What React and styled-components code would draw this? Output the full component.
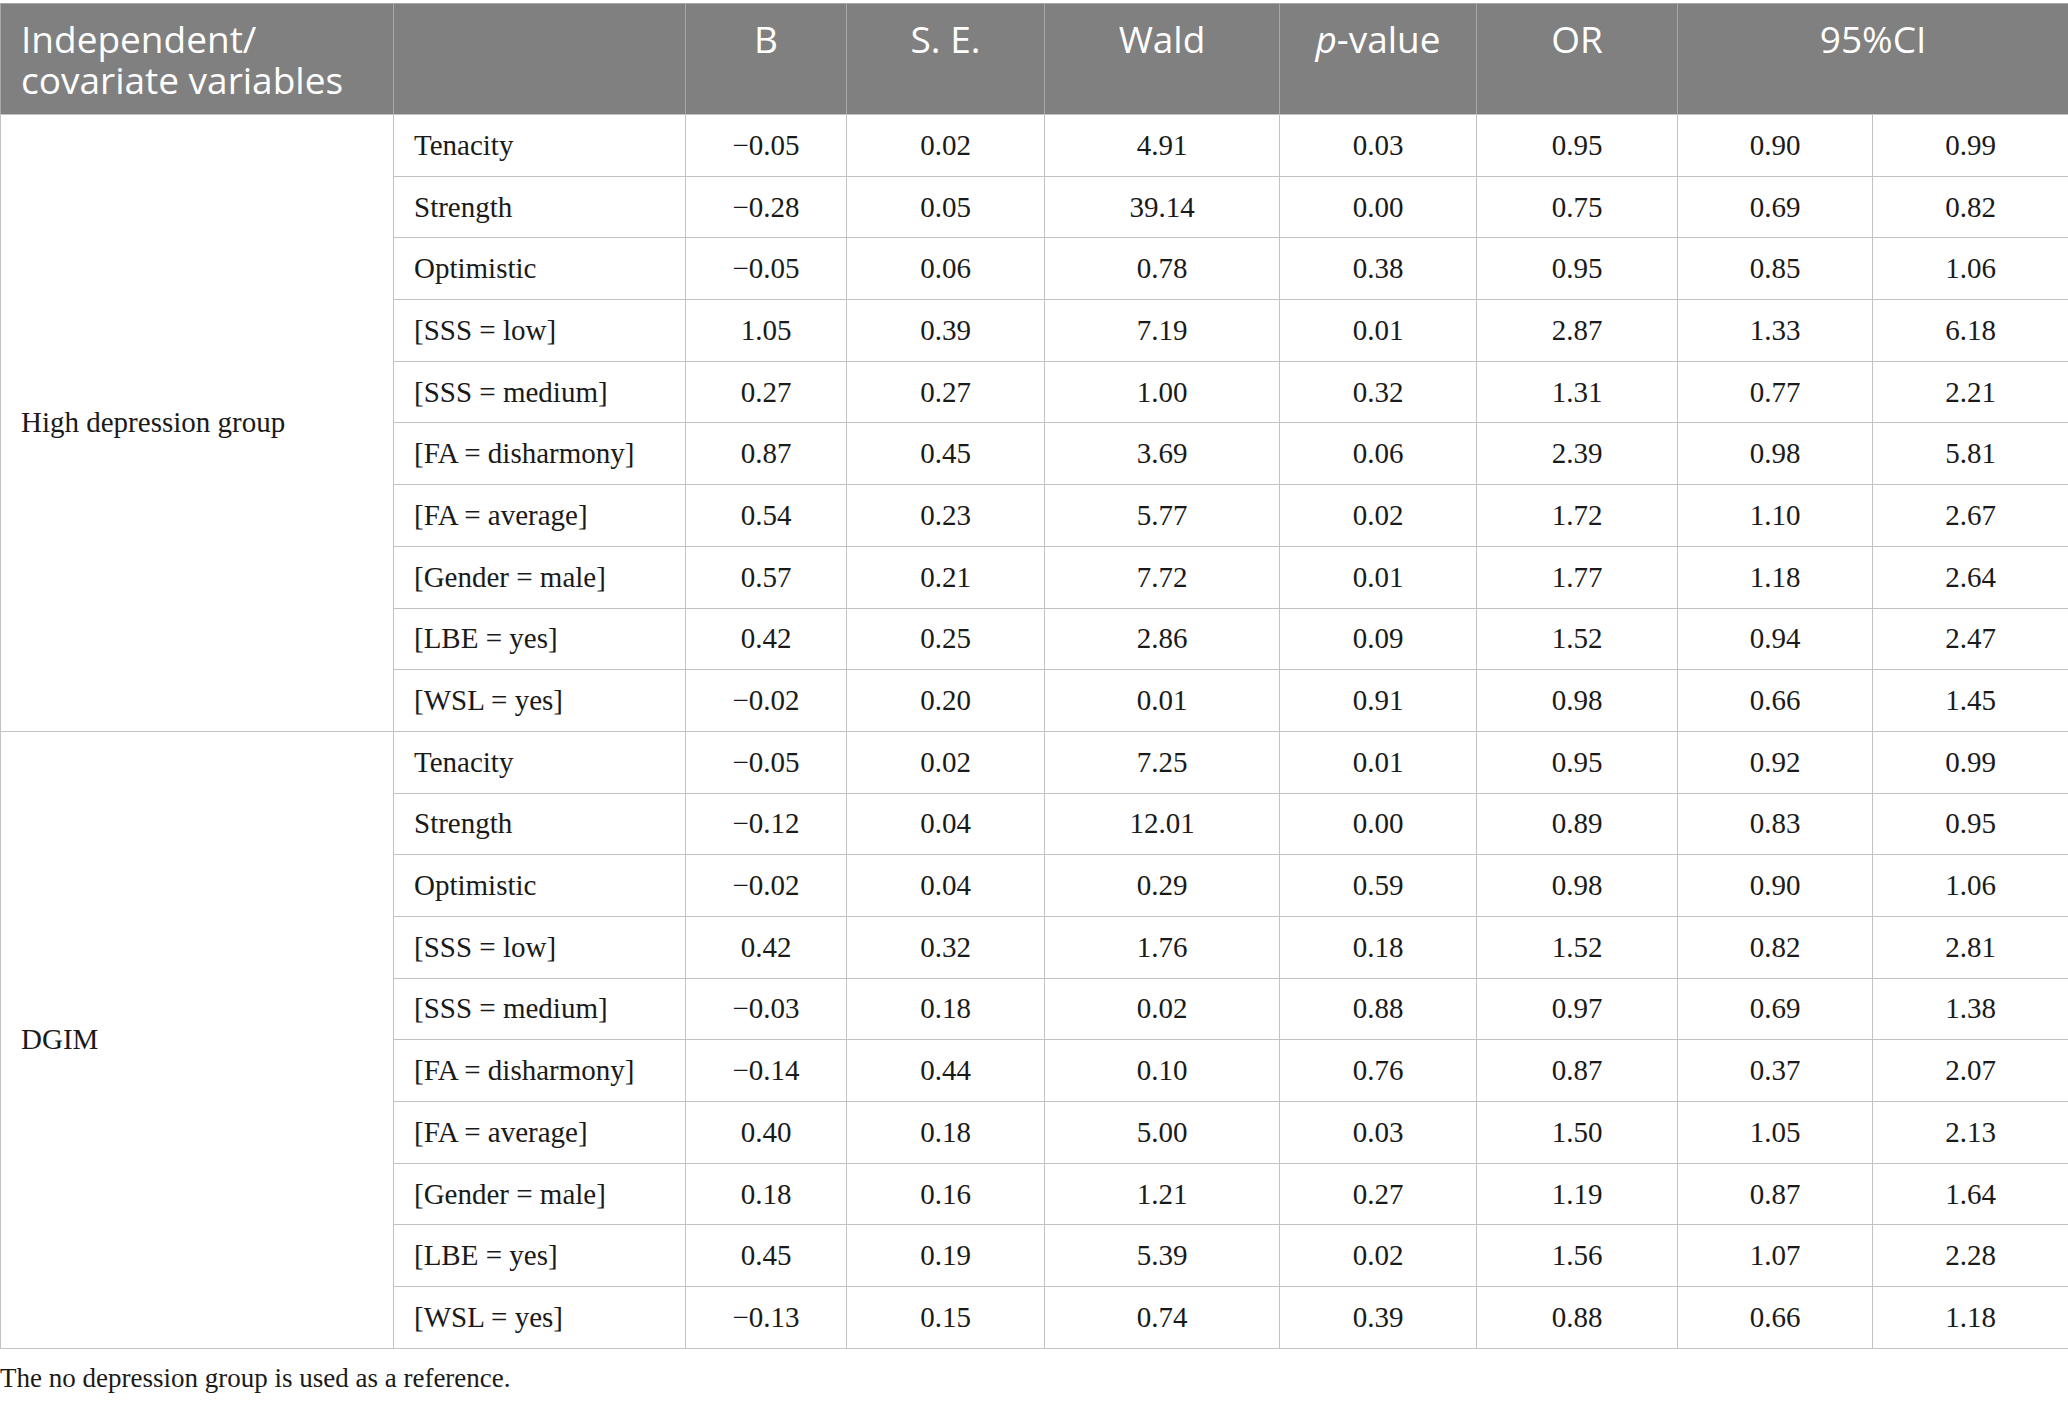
import styled, { createGlobalStyle } from 'styled-components'

const GlobalStyle = createGlobalStyle`
  html, body {
    margin: 0;
    padding: 0;
    background: #ffffff;
  }
`

const Page = styled.div`
  width: 2068px;
  padding-top: 3px;
  background: #ffffff;
`

const Table = styled.table`
  width: 2068px;
  table-layout: fixed;
  border-collapse: collapse;
  border: 1px solid #c2c2c2;
`

const HeadCell = styled.th`
  background: #7f807f;
  color: #ffffff;
  font-family: 'Open Sans', 'Noto Sans', sans-serif;
  font-weight: 400;
  font-size: 37px;
  line-height: 41px;
  height: 111px;
  box-sizing: border-box;
  padding: 14px 20px 0;
  vertical-align: top;
  text-align: ${({ left }) => (left ? 'left' : 'center')};
  border: 1px solid #a9a9a9;
  border-bottom-color: #c2c2c2;
`

const Cell = styled.td`
  font-family: 'Liberation Serif', 'DejaVu Serif', serif;
  font-size: 29px;
  color: #1a1a1a;
  height: 61.7px;
  box-sizing: border-box;
  padding: 0 20px;
  border: 1px solid #c2c2c2;
  text-align: ${({ left }) => (left ? 'left' : 'center')};
  vertical-align: middle;
`

const Note = styled.p`
  margin: 14px 0 0;
  font-family: 'Liberation Serif', 'DejaVu Serif', serif;
  font-size: 27px;
  color: #1a1a1a;
`

const widths = [393, 292, 161, 198, 235, 197, 201, 195, 196]

const labels = [
  'Tenacity',
  'Strength',
  'Optimistic',
  '[SSS = low]',
  '[SSS = medium]',
  '[FA = disharmony]',
  '[FA = average]',
  '[Gender = male]',
  '[LBE = yes]',
  '[WSL = yes]',
]

const groups = [
  {
    name: 'High depression group',
    rows: [
      ['−0.05', '0.02', '4.91', '0.03', '0.95', '0.90', '0.99'],
      ['−0.28', '0.05', '39.14', '0.00', '0.75', '0.69', '0.82'],
      ['−0.05', '0.06', '0.78', '0.38', '0.95', '0.85', '1.06'],
      ['1.05', '0.39', '7.19', '0.01', '2.87', '1.33', '6.18'],
      ['0.27', '0.27', '1.00', '0.32', '1.31', '0.77', '2.21'],
      ['0.87', '0.45', '3.69', '0.06', '2.39', '0.98', '5.81'],
      ['0.54', '0.23', '5.77', '0.02', '1.72', '1.10', '2.67'],
      ['0.57', '0.21', '7.72', '0.01', '1.77', '1.18', '2.64'],
      ['0.42', '0.25', '2.86', '0.09', '1.52', '0.94', '2.47'],
      ['−0.02', '0.20', '0.01', '0.91', '0.98', '0.66', '1.45'],
    ],
  },
  {
    name: 'DGIM',
    rows: [
      ['−0.05', '0.02', '7.25', '0.01', '0.95', '0.92', '0.99'],
      ['−0.12', '0.04', '12.01', '0.00', '0.89', '0.83', '0.95'],
      ['−0.02', '0.04', '0.29', '0.59', '0.98', '0.90', '1.06'],
      ['0.42', '0.32', '1.76', '0.18', '1.52', '0.82', '2.81'],
      ['−0.03', '0.18', '0.02', '0.88', '0.97', '0.69', '1.38'],
      ['−0.14', '0.44', '0.10', '0.76', '0.87', '0.37', '2.07'],
      ['0.40', '0.18', '5.00', '0.03', '1.50', '1.05', '2.13'],
      ['0.18', '0.16', '1.21', '0.27', '1.19', '0.87', '1.64'],
      ['0.45', '0.19', '5.39', '0.02', '1.56', '1.07', '2.28'],
      ['−0.13', '0.15', '0.74', '0.39', '0.88', '0.66', '1.18'],
    ],
  },
]

function App() {
  return (
    <Page>
      <GlobalStyle />
      <Table>
        <colgroup>
          {widths.map((w, i) => (
            <col key={`col-${i}`} style={{ width: w }} />
          ))}
        </colgroup>
        <thead>
          <tr>
            <HeadCell left>
              Independent/
              <br />
              covariate variables
            </HeadCell>
            <HeadCell />
            <HeadCell>B</HeadCell>
            <HeadCell>S. E.</HeadCell>
            <HeadCell>Wald</HeadCell>
            <HeadCell>
              <i>p</i>-value
            </HeadCell>
            <HeadCell>OR</HeadCell>
            <HeadCell colSpan={2}>95%CI</HeadCell>
          </tr>
        </thead>
        <tbody>
          {groups.map((group) =>
            group.rows.map((row, i) => (
              <tr key={`${group.name}-${i}`}>
                {i === 0 && (
                  <Cell left rowSpan={group.rows.length}>
                    {group.name}
                  </Cell>
                )}
                <Cell left>{labels[i]}</Cell>
                {row.map((v, j) => (
                  <Cell key={`${group.name}-${i}-${j}`}>{v}</Cell>
                ))}
              </tr>
            ))
          )}
        </tbody>
      </Table>
      <Note>The no depression group is used as a reference.</Note>
    </Page>
  )
}

export default App
